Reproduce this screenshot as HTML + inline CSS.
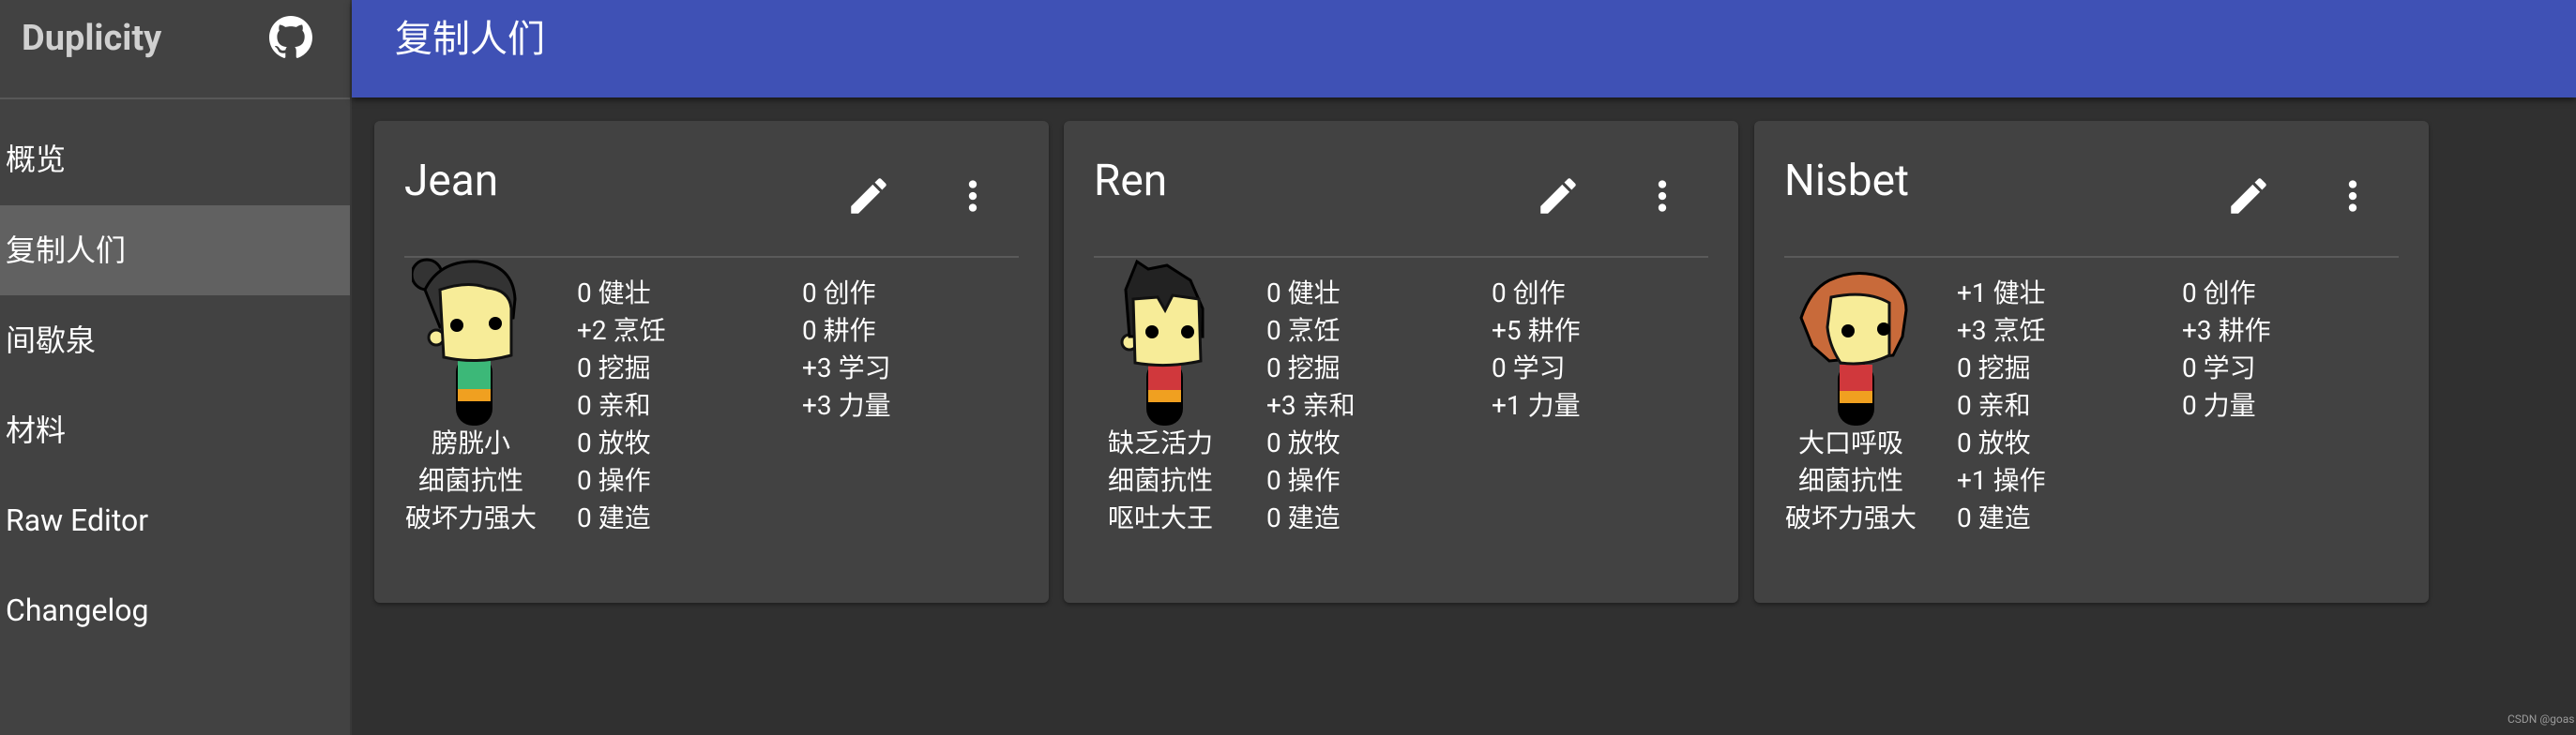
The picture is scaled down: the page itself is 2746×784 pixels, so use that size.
<!DOCTYPE html>
<html><head><meta charset="utf-8"><style>
*{margin:0;padding:0;box-sizing:border-box}
body{width:2746px;height:784px;overflow:hidden;background:#303030;font-family:"Roboto","Liberation Sans","Noto Sans CJK SC",sans-serif;color:#fff;position:relative}
.side{position:absolute;left:0;top:0;width:375px;height:784px;background:#424242;border-right:2px solid #383838}
.logo{position:absolute;left:23px;top:14px;font-size:38px;font-weight:bold;color:#d0d0d0;line-height:54px}
.gh{position:absolute;left:287px;top:17px;width:46px;height:46px}
.sdiv{position:absolute;left:0;top:104px;width:373px;height:2px;background:#585858}
.nav{position:absolute;left:0;width:373px;height:96px;line-height:96px;padding-left:6px;font-size:32px;color:#fff}
.nav.sel{background:#616161}
.top{position:absolute;left:375px;top:0;right:0;height:104px;background:#3f51b5;box-shadow:0 3px 6px rgba(0,0,0,.5)}
.top span{position:absolute;left:46px;top:14px;font-size:40px;line-height:56px}
.card{position:absolute;top:129px;width:719px;height:514px;background:#424242;border-radius:6px;box-shadow:0 2px 4px rgba(0,0,0,.4)}
.name{position:absolute;left:32px;top:36px;font-size:46px;line-height:56px}
.ic{position:absolute;top:55px;width:50px;height:50px}
.hr{position:absolute;left:32px;top:144px;width:655px;height:2px;background:#5a5a5a}
.av{position:absolute;left:40px;top:140px}
.tr{position:absolute;left:23px;top:324px;width:160px;text-align:center;font-size:28px;line-height:40px}
.c1,.c2{position:absolute;top:164px;font-size:28px;line-height:40px;white-space:nowrap}
.c1{left:216px}.c2{left:456px}
.wm{position:absolute;left:2673px;top:760px;font-size:12px;color:#9a9a9a}
</style></head><body>
<div class="side">
<div class="logo">Duplicity</div>
<svg class="gh" viewBox="0 0 16 16"><path fill="#fff" d="M8 0C3.58 0 0 3.58 0 8c0 3.54 2.29 6.53 5.47 7.59.4.07.55-.17.55-.38 0-.19-.01-.82-.01-1.49-2.01.37-2.53-.49-2.690-.94-.09-.23-.48-.94-.82-1.13-.28-.15-.68-.52-.01-.53.63-.01 1.08.58 1.23.82.72 1.21 1.87.87 2.33.66.07-.52.28-.87.51-1.07-1.78-.2-3.64-.89-3.64-3.95 0-.87.31-1.59.82-2.15-.08-.2-.36-1.02.08-2.12 0 0 .67-.21 2.2.82.64-.18 1.32-.27 2-.27.68 0 1.36.09 2 .27 1.53-1.04 2.2-.82 2.2-.82.44 1.1.16 1.92.08 2.12.51.56.82 1.27.82 2.15 0 3.07-1.87 3.75-3.65 3.95.29.25.54.73.54 1.48 0 1.07-.01 1.93-.01 2.2 0 .21.15.46.55.38A8.013 8.013 0 0016 8c0-4.42-3.58-8-8-8z"/></svg>
<div class="sdiv"></div>
<div class="nav" style="top:122px">概览</div>
<div class="nav sel" style="top:219px">复制人们</div>
<div class="nav" style="top:315px">间歇泉</div>
<div class="nav" style="top:411px">材料</div>
<div class="nav" style="top:507px">Raw Editor</div>
<div class="nav" style="top:603px">Changelog</div>
</div>
<div class="top"><span>复制人们</span></div>

<div class="card" style="left:399px">
<div class="name">Jean</div>
<svg class="ic" style="left:502px" viewBox="0 0 24 24"><path fill="#fff" d="M3 17.25V21h3.75L17.81 9.94l-3.75-3.75L3 17.25zM20.71 7.04c.39-.39.39-1.02 0-1.41l-2.34-2.34a.996.996 0 0 0-1.41 0l-1.83 1.83 3.75 3.75 1.830-1.83z"/></svg>
<svg class="ic" style="left:613px" viewBox="0 0 24 24"><path fill="#fff" d="M12 8c1.1 0 2-.9 2-2s-.9-2-2-2-2 .9-2 2 .9 2 2 2zm0 2c-1.1 0-2 .9-2 2s.9 2 2 2 2-.9 2-2-.9-2-2-2zm0 6c-1.1 0-2 .9-2 2s.9 2 2 2 2-.9 2-2-.9-2-2-2z"/></svg>
<div class="hr"></div>
<svg class="av" width="120" height="190" viewBox="0 0 120 190">
<rect x="47" y="110" width="39" height="75" rx="18" fill="#000"/>
<rect x="49" y="112" width="35" height="36" fill="#3cb878"/>
<rect x="49" y="146" width="35" height="13" fill="#f0a020"/>
<circle cx="26" cy="91" r="8" fill="#f7ec98" stroke="#111" stroke-width="3"/>
<circle cx="16" cy="24" r="16" fill="#333" stroke="#000" stroke-width="3"/>
<path d="M14 40 Q30 8 70 10 Q108 14 110 50 L108 70 L30 80 Z" fill="#333" stroke="#000" stroke-width="3"/>
<path d="M30 40 Q60 30 80 38 Q104 40 106 60 L106 110 Q70 120 34 112 Z" fill="#f7ec98" stroke="#111" stroke-width="3"/>
<circle cx="48" cy="78" r="7" fill="#000"/><circle cx="89" cy="76" r="7" fill="#000"/>
</svg>
<div class="tr">膀胱小<br>细菌抗性<br>破坏力强大</div>
<div class="c1">0 健壮<br>+2 烹饪<br>0 挖掘<br>0 亲和<br>0 放牧<br>0 操作<br>0 建造</div>
<div class="c2">0 创作<br>0 耕作<br>+3 学习<br>+3 力量</div>
</div>

<div class="card" style="left:1134px">
<div class="name">Ren</div>
<svg class="ic" style="left:502px" viewBox="0 0 24 24"><path fill="#fff" d="M3 17.25V21h3.75L17.81 9.94l-3.75-3.75L3 17.25zM20.71 7.04c.39-.39.39-1.02 0-1.41l-2.34-2.34a.996.996 0 0 0-1.41 0l-1.83 1.83 3.75 3.75 1.83-1.83z"/></svg>
<svg class="ic" style="left:613px" viewBox="0 0 24 24"><path fill="#fff" d="M12 8c1.1 0 2-.9 2-2s-.9-2-2-2-2 .9-2 2 .9 2 2 2zm0 2c-1.1 0-2 .9-2 2s.9 2 2 2 2-.9 2-2-.9-2-2-2zm0 6c-1.1 0-2 .9-2 2s.9 2 2 2 2-.9 2-2-.9-2-2-2z"/></svg>
<div class="hr"></div>
<svg class="av" width="120" height="190" viewBox="0 0 120 190">
<rect x="48" y="115" width="39" height="70" rx="18" fill="#000"/>
<rect x="50" y="117" width="35" height="32" fill="#d0383c"/>
<rect x="50" y="147" width="35" height="13" fill="#f0a020"/>
<circle cx="30" cy="96" r="8" fill="#f7ec98" stroke="#111" stroke-width="3"/>
<path d="M30 90 L26 40 L38 10 L50 18 L70 14 L95 30 L108 60 L108 90 Z" fill="#222" stroke="#000" stroke-width="3"/>
<path d="M34 50 L60 48 L68 62 L76 46 L104 50 L106 116 Q70 124 36 118 Z" fill="#f7ec98" stroke="#111" stroke-width="3"/>
<circle cx="54" cy="85" r="7" fill="#000"/><circle cx="92" cy="85" r="7" fill="#000"/>
</svg>
<div class="tr">缺乏活力<br>细菌抗性<br>呕吐大王</div>
<div class="c1">0 健壮<br>0 烹饪<br>0 挖掘<br>+3 亲和<br>0 放牧<br>0 操作<br>0 建造</div>
<div class="c2">0 创作<br>+5 耕作<br>0 学习<br>+1 力量</div>
</div>

<div class="card" style="left:1870px">
<div class="name">Nisbet</div>
<svg class="ic" style="left:502px" viewBox="0 0 24 24"><path fill="#fff" d="M3 17.25V21h3.75L17.81 9.94l-3.75-3.75L3 17.25zM20.71 7.04c.39-.39.39-1.02 0-1.41l-2.34-2.34a.996.996 0 0 0-1.41 0l-1.83 1.83 3.75 3.75 1.83-1.83z"/></svg>
<svg class="ic" style="left:613px" viewBox="0 0 24 24"><path fill="#fff" d="M12 8c1.1 0 2-.9 2-2s-.9-2-2-2-2 .9-2 2 .9 2 2 2zm0 2c-1.1 0-2 .9-2 2s.9 2 2 2 2-.9 2-2-.9-2-2-2zm0 6c-1.1 0-2 .9-2 2s.9 2 2 2 2-.9 2-2-.9-2-2-2z"/></svg>
<div class="hr"></div>
<svg class="av" width="130" height="190" viewBox="0 0 130 190">
<rect x="49" y="118" width="39" height="67" rx="18" fill="#000"/>
<rect x="51" y="120" width="35" height="30" fill="#d0383c"/>
<rect x="51" y="148" width="35" height="13" fill="#f0a020"/>
<path d="M10 70 Q20 40 40 30 Q70 16 100 28 Q122 40 122 62 L118 90 L108 110 L40 116 L22 100 Z" fill="#c86a3a" stroke="#000" stroke-width="3"/>
<path d="M42 48 Q80 40 104 54 L104 110 Q80 122 52 118 Q40 100 38 80 Z" fill="#f7ec98" stroke="#111" stroke-width="3"/>
<circle cx="60" cy="84" r="7" fill="#000"/><circle cx="98" cy="82" r="7" fill="#000"/>
</svg>
<div class="tr">大口呼吸<br>细菌抗性<br>破坏力强大</div>
<div class="c1">+1 健壮<br>+3 烹饪<br>0 挖掘<br>0 亲和<br>0 放牧<br>+1 操作<br>0 建造</div>
<div class="c2">0 创作<br>+3 耕作<br>0 学习<br>0 力量</div>
</div>
<div class="wm">CSDN @goas</div>
</body></html>
